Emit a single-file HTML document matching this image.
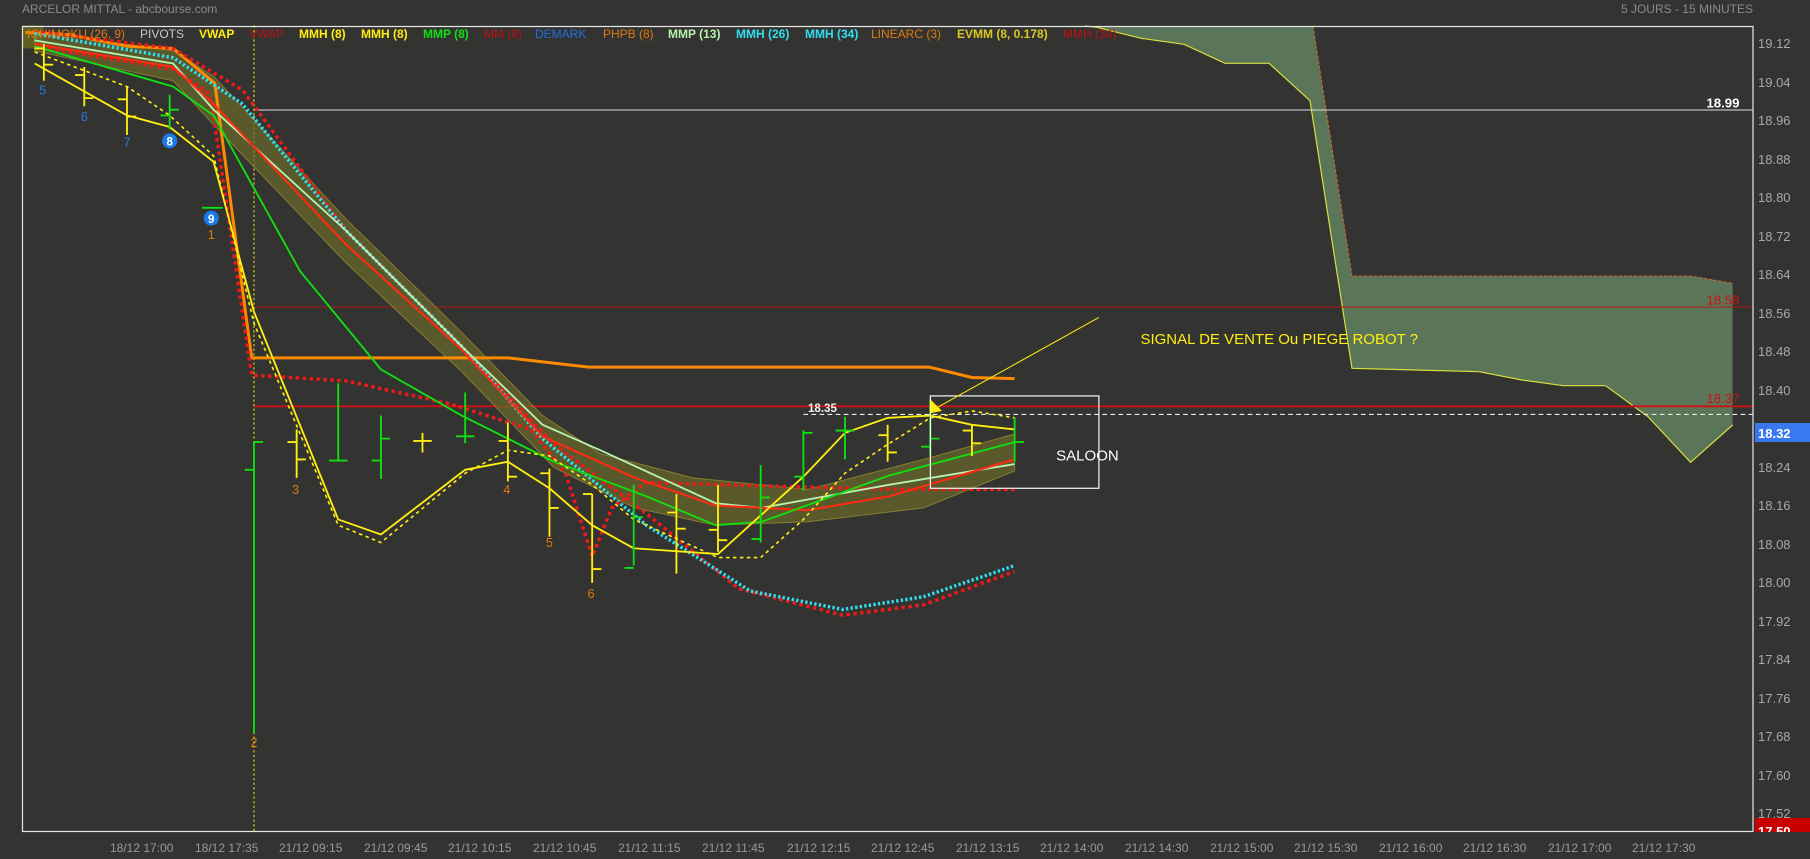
<!DOCTYPE html>
<html><head><meta charset="utf-8"><style>
html,body{margin:0;padding:0;background:#333332;}
svg{display:block}
text{font-family:"Liberation Sans",Arial,sans-serif}
</style></head><body>
<svg width="1810" height="859" viewBox="0 0 1810 859" xmlns="http://www.w3.org/2000/svg">
<defs><clipPath id="rb"><rect x="1755" y="818" width="55" height="14"/></clipPath></defs>
<rect width="1810" height="859" fill="#333332"/>
<text x="22" y="13" font-size="12" fill="#8a8a8a">ARCELOR MITTAL - abcbourse.com</text>
<text x="1753" y="13" font-size="12" fill="#8a8a8a" text-anchor="end">5 JOURS - 15 MINUTES</text>

<!-- cloud (orig coords) -->
<polygon points="1085,26 1313,26 1352,276 1690.6,276 1732.6,283.3 1732.6,425 1690.6,462.3 1648,416.7 1605.6,385.7 1563.5,385.7 1522,380 1479,371.7 1352,368.3 1310,100.7 1269,63.3 1225,63.3 1184,44.3 1141,38.3 1097,27.3" fill="#5a7558"/>
<polyline points="1085,26 1097,27.3 1141,38.3 1184,44.3 1225,63.3 1269,63.3 1310,100.7 1352,368.3 1479,371.7 1522,380 1563.5,385.7 1605.6,385.7 1648,416.7 1690.6,462.3 1732.6,425" fill="none" stroke="#d8e040" stroke-width="1.2"/>
<polyline points="1313,26 1352,276 1690.6,276 1732.6,283.3" fill="none" stroke="#e06030" stroke-width="1" stroke-dasharray="3,2"/>

<g transform="scale(1.1543)">
<line x1="220" y1="95.3" x2="1519" y2="95.3" stroke="#ddd" stroke-width="0.9"/>
<line x1="220" y1="266" x2="1519" y2="266" stroke="#c01010" stroke-width="0.8"/>
<line x1="220" y1="352" x2="1519" y2="352" stroke="#d01010" stroke-width="1.6"/>
<line x1="696" y1="359" x2="1519" y2="359" stroke="#eee" stroke-width="1" stroke-dasharray="4,3"/>
<text x="700" y="357" font-size="10" fill="#eee" font-weight="bold">18.35</text>
<text x="1507" y="93" font-size="11.5" fill="#fff" font-weight="bold" text-anchor="end">18.99</text>
<text x="1507" y="264" font-size="11.5" fill="#d01010" text-anchor="end">18.58</text>
<text x="1507" y="349" font-size="11.5" fill="#d01010" text-anchor="end">18.37</text>
<line x1="220" y1="22" x2="220" y2="720" stroke="#f0e020" stroke-width="0.9" stroke-dasharray="2,2"/>

<rect x="19" y="22" width="19" height="20" fill="#6a6a20" opacity="0.8"/>
<polygon points="30,27 150,44 185,66 300,190 400,288 470,360 520,393 600,414 700,424 800,398 879,376 879,408 800,440 700,452 620,455 550,440 480,405 400,322 300,228 185,108 150,70 30,44" fill="#6b6a2a" opacity="0.7" stroke="#b0a030" stroke-width="0.8"/>

<polyline points="22,28 60,30 110,40 150,42 186,72 218,310 440,310 510,318 805,318 842,327 879,328" fill="none" stroke="#ff8a00" stroke-width="2.6"/>
<polyline points="30,27 150,42 210,78 300,200 400,300 480,385 560,445 640,510 730,533 800,524 879,495" fill="none" stroke="#ee1a1a" stroke-width="3" stroke-dasharray="3,3"/>
<polyline points="30,29 150,50 210,90 300,200 400,300 470,380 560,455 650,512 730,528 800,517 879,490" fill="none" stroke="#30e0f0" stroke-width="3" stroke-dasharray="2,2"/>
<polyline points="30,40 150,60 180,80 185,100 218,325 300,330 390,350 460,372 490,410 513,482 530,440 560,418 700,422 780,424 879,424" fill="none" stroke="#ee1a1a" stroke-width="3" stroke-dasharray="3,3"/>
<polyline points="30,35 150,55 185,95 300,200 400,300 470,368 520,390 620,436 660,440 770,420 879,402" fill="none" stroke="#b8f0b0" stroke-width="1.6"/>
<polyline points="30,38 150,58 185,90 300,212 400,303 470,378 550,414 620,438 700,442 770,430 879,398" fill="none" stroke="#ff2a10" stroke-width="1.8"/>
<polyline points="30,40 150,75 185,100 260,235 330,320 400,360 480,400 560,430 620,455 660,452 770,412 879,383" fill="none" stroke="#10e010" stroke-width="1.6"/>
<polyline points="30,55 110,100 147,110 185,140 220,270 293,450 330,463 403,407 440,400 476,423 513,455 549,475 622,480 696,413 732,375 769,362 806,360 842,368 879,372" fill="none" stroke="#ffee10" stroke-width="1.6"/>
<polyline points="30,45 110,75 147,100 185,135 220,280 293,455 330,470 403,410 440,390 476,395 513,420 549,450 622,483 659,483 696,450 732,410 769,385 806,362 842,356 879,362" fill="none" stroke="#ffee10" stroke-width="1.4" stroke-dasharray="3,3"/>

<g stroke-width="1.6" fill="none">
<path d="M38 38V70M30 42H38M38 56H46" stroke="#ffee10"/>
<path d="M73 58V92M65 65H73M73 85H81" stroke="#ffee10"/>
<path d="M110 75V117M102 86H110M110 101H118" stroke="#ffee10"/>
<path d="M147 82V112M139 100H147M147 95H155" stroke="#10e010"/>
<path d="M175 180H193" stroke="#10e010"/>
<path d="M220 383V635M212 407H220M220 383H228" stroke="#10e010"/>
<path d="M257 372V414M249 383H257M257 398H265" stroke="#ffee10"/>
<path d="M293 332V400M285 399H301" stroke="#10e010"/>
<path d="M330 360V415M322 399H330M330 380H338" stroke="#10e010"/>
<path d="M366 375V392M358 382H374" stroke="#ffee10"/>
<path d="M403 340V384M395 378H411" stroke="#10e010"/>
<path d="M440 366V417M432 382H440M440 413H448" stroke="#ffee10"/>
<path d="M476 406V465M476 440H484M468 410H476" stroke="#ffee10"/>
<path d="M513 428V505M505 428H513M513 493H521" stroke="#ffee10"/>
<path d="M549 420V490M541 492H549M549 448H557" stroke="#10e010"/>
<path d="M586 428V497M578 444H586M586 458H594" stroke="#ffee10"/>
<path d="M622 420V478M614 459H622M622 468H630" stroke="#ffee10"/>
<path d="M659 403V470M651 467H659M659 431H667" stroke="#10e010"/>
<path d="M696 373V425M696 375H704M688 413H696" stroke="#10e010"/>
<path d="M732 361V398M724 373H740" stroke="#10e010"/>
<path d="M769 368V400M761 377H769M769 392H777" stroke="#ffee10"/>
<path d="M806 346V395M798 387H806M806 380H814" stroke="#10e010"/>
<path d="M842 368V395M834 373H842M842 384H850" stroke="#ffee10"/>
<path d="M879 362V400M879 383H887" stroke="#10e010"/>
</g>

<g font-size="11" text-anchor="middle">
<text x="37" y="82" fill="#2a7ae0">5</text>
<text x="73" y="105" fill="#2a7ae0">6</text>
<text x="110" y="127" fill="#2a7ae0">7</text>
<circle cx="147" cy="122" r="6.5" fill="#1a7ae8"/><text x="147" y="126" fill="#fff" font-weight="bold" font-size="10">8</text>
<circle cx="183" cy="189" r="6.5" fill="#1a7ae8"/><text x="183" y="193" fill="#fff" font-weight="bold" font-size="10">9</text>
<text x="183" y="207" fill="#e07a10">1</text>
<text x="220" y="647" fill="#e07a10">2</text>
<text x="256" y="428" fill="#e07a10">3</text>
<text x="439" y="428" fill="#e07a10">4</text>
<text x="476" y="474" fill="#e07a10">5</text>
<text x="512" y="518" fill="#e07a10">6</text>
</g>

<rect x="806" y="343" width="146" height="80" fill="none" stroke="#fff" stroke-width="1"/>
<text x="915" y="399" font-size="13" fill="#fff">SALOON</text>
<line x1="952" y1="275" x2="812" y2="353" stroke="#ffee10" stroke-width="0.9"/>
<polygon points="806,346 806,358 816,356" fill="#ffee10"/>
<text x="988" y="298" font-size="13" fill="#ffee10">SIGNAL DE VENTE Ou PIEGE ROBOT ?</text>
</g>

<rect x="22.5" y="26.5" width="1730.5" height="805" fill="none" stroke="#e8e8e8" stroke-width="1.2"/>

<g font-size="12" font-weight="bold">
<text x="27" y="38" fill="#e07a10" font-weight="normal">ICHIMOKU (26, 9)</text>
<text x="140" y="38" fill="#c8c8c8" font-weight="normal">PIVOTS</text>
<text x="199" y="38" fill="#ffee10">VWAP</text>
<text x="249" y="38" fill="#c01010" font-weight="normal">VWAP</text>
<text x="299" y="38" fill="#ffee10">MMH (8)</text>
<text x="361" y="38" fill="#ffee10">MMH (8)</text>
<text x="423" y="38" fill="#10e010">MMP (8)</text>
<text x="484" y="38" fill="#c01010" font-weight="normal">MM (8)</text>
<text x="535" y="38" fill="#1a70e0" font-weight="normal">DEMARK</text>
<text x="603" y="38" fill="#e07a10" font-weight="normal">PHPB (8)</text>
<text x="668" y="38" fill="#b8f0b0">MMP (13)</text>
<text x="736" y="38" fill="#30e0f0">MMH (26)</text>
<text x="805" y="38" fill="#30e0f0">MMH (34)</text>
<text x="871" y="38" fill="#e07a10" font-weight="normal">LINEARC (3)</text>
<text x="957" y="38" fill="#d8c820">EVMM (8, 0.178)</text>
<text x="1063" y="38" fill="#c01010" font-weight="normal">MMH (34)</text>
</g>

<g font-size="13" fill="#a8a8a8">
<text x="1758" y="48">19.12</text><text x="1758" y="87">19.04</text><text x="1758" y="125">18.96</text>
<text x="1758" y="164">18.88</text><text x="1758" y="202">18.80</text><text x="1758" y="241">18.72</text>
<text x="1758" y="279">18.64</text><text x="1758" y="318">18.56</text><text x="1758" y="356">18.48</text>
<text x="1758" y="395">18.40</text><text x="1758" y="472">18.24</text>
<text x="1758" y="510">18.16</text><text x="1758" y="549">18.08</text><text x="1758" y="587">18.00</text>
<text x="1758" y="626">17.92</text><text x="1758" y="664">17.84</text><text x="1758" y="703">17.76</text>
<text x="1758" y="741">17.68</text><text x="1758" y="780">17.60</text><text x="1758" y="818">17.52</text>
</g>
<rect x="1755" y="423" width="55" height="19" fill="#3a78f0"/>
<text x="1758" y="438" font-size="13" fill="#fff" font-weight="bold">18.32</text>
<rect x="1755" y="818" width="55" height="14" fill="#c80000"/>
<text x="1758" y="836" font-size="13" fill="#fff" font-weight="bold" clip-path="url(#rb)">17.50</text>

<g font-size="12" fill="#9a9a9a">
<text x="110" y="852">18/12 17:00</text><text x="195" y="852">18/12 17:35</text>
<text x="279" y="852">21/12 09:15</text><text x="364" y="852">21/12 09:45</text>
<text x="448" y="852">21/12 10:15</text><text x="533" y="852">21/12 10:45</text>
<text x="618" y="852">21/12 11:15</text><text x="702" y="852">21/12 11:45</text>
<text x="787" y="852">21/12 12:15</text><text x="871" y="852">21/12 12:45</text>
<text x="956" y="852">21/12 13:15</text><text x="1040" y="852">21/12 14:00</text>
<text x="1125" y="852">21/12 14:30</text><text x="1210" y="852">21/12 15:00</text>
<text x="1294" y="852">21/12 15:30</text><text x="1379" y="852">21/12 16:00</text>
<text x="1463" y="852">21/12 16:30</text><text x="1548" y="852">21/12 17:00</text>
<text x="1632" y="852">21/12 17:30</text>
</g>
</svg>
</body></html>
